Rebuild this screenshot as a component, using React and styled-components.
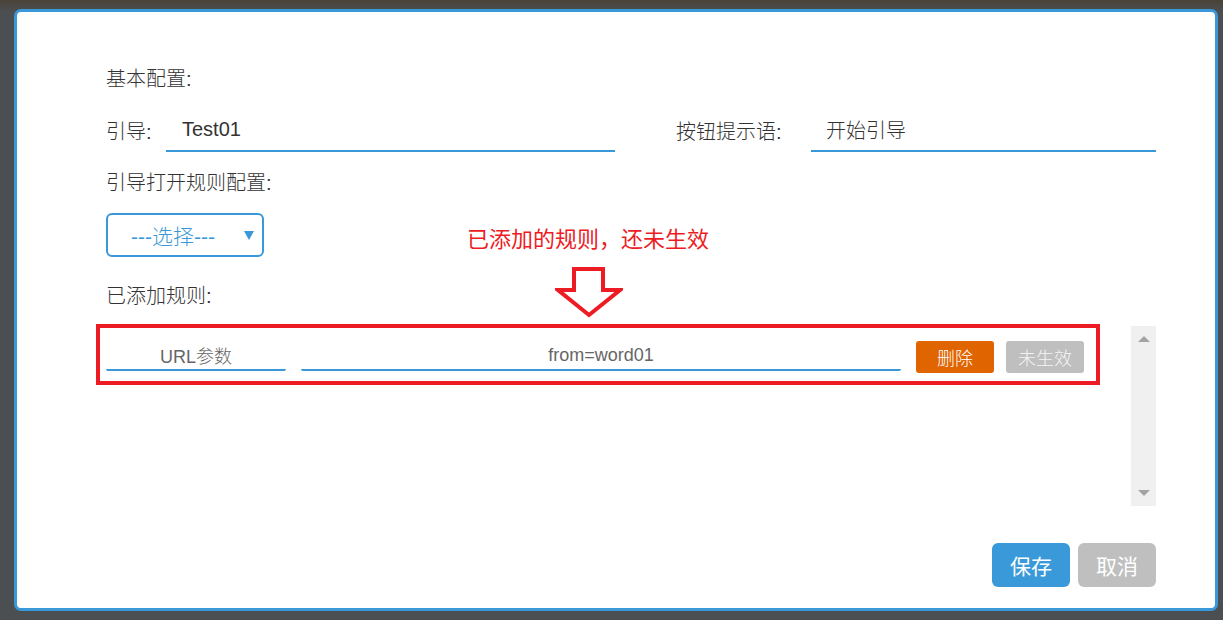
import React from 'react';
import styled, { createGlobalStyle } from 'styled-components';

const BLUE = '#3898d8';
const RED = '#ed1c24';
const FONT = `"Liberation Sans", "Noto Sans CJK SC", sans-serif`;

const GlobalStyle = createGlobalStyle`
  html, body {
    margin: 0;
    padding: 0;
    background: #4c4f52;
    font-family: ${FONT};
  }
  * {
    box-sizing: border-box;
  }
`;

const Overlay = styled.div`
  min-height: 100vh;
  padding: 9px 5px 9px 14px;
  background: linear-gradient(#4a4237 0, #4c4f52 12px);
`;

const Dialog = styled.div`
  position: relative;
  width: 1204px;
  height: 602px;
  background: #fff;
  border: 3px solid ${BLUE};
  border-radius: 7px;
  padding: 52px 59px 0 89px;
  color: #333;
`;

const Heading = styled.div`
  font-size: 20px;
  font-weight: 300;
  line-height: 30px;
  height: 30px;
  margin-top: ${(p) => p.$top || 0}px;
`;

const FieldRow = styled.div`
  display: flex;
  align-items: center;
  margin-top: 14px;
  height: 44px;
`;

const Label = styled.div`
  width: ${(p) => p.$w}px;
  font-size: 20px;
  font-weight: 300;
  margin-left: ${(p) => p.$ml || 0}px;
  flex-shrink: 0;
`;

const LineInput = styled.div`
  width: ${(p) => (p.$w ? `${p.$w}px` : 'auto')};
  flex: ${(p) => (p.$w ? '0 0 auto' : '1')};
  height: 44px;
  border-bottom: 2px solid ${BLUE};
  display: flex;
  align-items: center;
  padding-left: ${(p) => p.$pl}px;
  font-size: 20px;
  font-weight: 300;
  color: #333;
`;

const Select = styled.div`
  position: relative;
  margin-top: 15px;
  width: 158px;
  height: 44px;
  border: 2px solid ${BLUE};
  border-radius: 6px;
  color: ${BLUE};
  font-size: 21px;
  font-weight: 300;
  display: flex;
  align-items: center;
  padding-left: 23px;
`;

const Caret = styled.span`
  position: absolute;
  right: 8px;
  top: 16px;
  width: 0;
  height: 0;
  border-left: 5px solid transparent;
  border-right: 5px solid transparent;
  border-top: 9px solid ${BLUE};
`;

const RulesArea = styled.div`
  display: flex;
  margin-top: 13px;
  height: 182px;
`;

const RuleList = styled.div`
  flex: 1;
`;

const RuleRow = styled.div`
  display: flex;
  align-items: flex-start;
  width: 1004px;
  margin-left: -10px;
  border: 4px solid ${RED};
  padding: 13px 12px 8px 6px;
`;

const RuleInput = styled.div`
  width: ${(p) => p.$w}px;
  height: 30px;
  margin-right: 15px;
  border-bottom: 2px solid ${BLUE};
  border-radius: 0 0 2px 2px;
  display: flex;
  align-items: center;
  justify-content: center;
  font-size: 18px;
  font-weight: 300;
  color: #666;
`;

const SmallButton = styled.div`
  width: 78px;
  height: 32px;
  margin-left: ${(p) => p.$ml || 0}px;
  border-radius: 3px;
  background: ${(p) => p.$bg};
  color: ${(p) => p.$fg || '#fff'};
  font-size: 18px;
  font-weight: 300;
  display: flex;
  align-items: center;
  justify-content: center;
`;

const ScrollTrack = styled.div`
  width: 25px;
  height: 180px;
  margin-top: 2px;
  background: #f0f0f0;
  display: flex;
  flex-direction: column;
  justify-content: space-between;
  align-items: center;
  padding: 10px 0;
`;

const ScrollArrow = styled.span`
  width: 0;
  height: 0;
  border-left: 6px solid transparent;
  border-right: 6px solid transparent;
  ${(p) =>
    p.$down
      ? 'border-top: 6px solid #a3a3a3;'
      : 'border-bottom: 6px solid #a3a3a3;'}
`;

const Footer = styled.div`
  display: flex;
  justify-content: flex-end;
  gap: 8px;
  margin-top: 37px;
`;

const Button = styled.div`
  width: 78px;
  height: 44px;
  border-radius: 6px;
  background: ${(p) => p.$bg};
  color: #fff;
  font-size: 21px;
  display: flex;
  align-items: center;
  justify-content: center;
`;

const Note = styled.div`
  position: absolute;
  left: 450px;
  top: 213px;
  font-size: 22px;
  line-height: 30px;
  color: ${RED};
`;

const NoteArrow = styled.svg`
  position: absolute;
  left: 538px;
  top: 253px;
`;

export default function App() {
  return (
    <Overlay>
      <GlobalStyle />
      <Dialog>
        <Heading>基本配置:</Heading>
        <FieldRow>
          <Label $w={60}>引导:</Label>
          <LineInput $w={449} $pl={16}>Test01</LineInput>
          <Label $w={135} $ml={61}>按钮提示语:</Label>
          <LineInput $pl={15}>开始引导</LineInput>
        </FieldRow>
        <Heading $top={16}>引导打开规则配置:</Heading>
        <Select>
          ---选择---
          <Caret />
        </Select>
        <Heading $top={24}>已添加规则:</Heading>
        <RulesArea>
          <RuleList>
            <RuleRow>
              <RuleInput $w={180}>URL参数</RuleInput>
              <RuleInput $w={600}>from=word01</RuleInput>
              <SmallButton $bg="#e06400">删除</SmallButton>
              <SmallButton $bg="#bfbfbf" $fg="#f4f4f4" $ml={12}>
                未生效
              </SmallButton>
            </RuleRow>
          </RuleList>
          <ScrollTrack>
            <ScrollArrow />
            <ScrollArrow $down />
          </ScrollTrack>
        </RulesArea>
        <Footer>
          <Button $bg="#3a9ad9">保存</Button>
          <Button $bg="#bfbfbf">取消</Button>
        </Footer>

        <Note>已添加的规则，还未生效</Note>
        <NoteArrow width="68" height="54" viewBox="0 0 68 54">
          <polygon
            points="19,4 48,4 48,25 65,25 34,50 3,25 19,25"
            fill="none"
            stroke={RED}
            strokeWidth="4"
            strokeLinejoin="miter"
          />
        </NoteArrow>
      </Dialog>
    </Overlay>
  );
}
